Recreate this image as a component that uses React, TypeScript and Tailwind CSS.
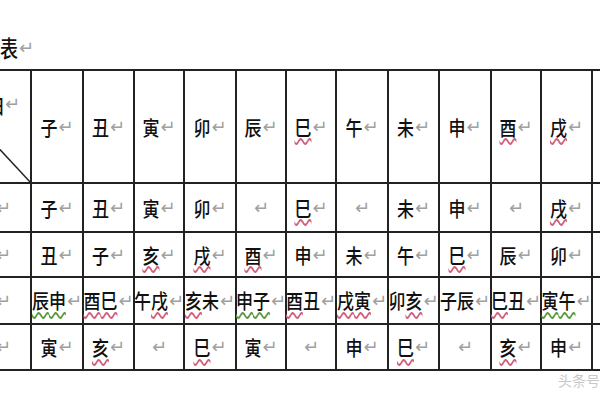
import React from 'react'

type Cell = [string, string]

const header: Cell[] = [
  ['子', '.'], ['丑', '.'], ['寅', '.'], ['卯', '.'], ['辰', '.'], ['巳', 'r'],
  ['午', '.'], ['未', '.'], ['申', '.'], ['酉', 'r'], ['戌', 'r'], ['', ''],
]

const rows: Cell[][] = [
  [['子', '.'], ['丑', '.'], ['寅', '.'], ['卯', '.'], ['', ''], ['巳', 'r'], ['', ''], ['未', '.'], ['申', '.'], ['', ''], ['戌', 'r'], ['', '']],
  [['丑', '.'], ['子', '.'], ['亥', 'r'], ['戌', 'r'], ['酉', 'r'], ['申', '.'], ['未', '.'], ['午', '.'], ['巳', 'r'], ['辰', '.'], ['卯', '.'], ['', '']],
  [['辰申', 'gg'], ['酉巳', 'rr'], ['午戌', '.r'], ['亥未', 'r.'], ['申子', 'gg'], ['酉丑', 'r.'], ['戌寅', 'rr'], ['卯亥', '.r'], ['子辰', '..'], ['巳丑', 'r.'], ['寅午', 'gg'], ['', '']],
  [['寅', '.'], ['亥', 'r'], ['', ''], ['巳', 'r'], ['寅', '.'], ['', ''], ['申', '.'], ['巳', 'r'], ['', ''], ['亥', 'r'], ['申', '.'], ['', '']],
]

const rowHeights = ['h-[49px]', 'h-[45px]', 'h-[47px]', 'h-[46px]']

// Word's paragraph mark
function Mark() {
  return <span className="ml-[1px] text-[18px] leading-none text-[#a0a0a0] font-['DejaVu_Sans',sans-serif]">↵</span>
}

function Word({ text, marks }: { text: string; marks: string }) {
  return (
    <span className="inline-flex">
      {text.split('').map((ch, i) => (
        <span
          key={i}
          className={
            'inline-block scale-y-[1.2] text-[17px] font-medium leading-none text-[#111] ' +
            (marks[i] === 'r'
              ? 'underline decoration-wavy decoration-[#d0607a] underline-offset-[2px]'
              : marks[i] === 'g'
              ? 'underline decoration-wavy decoration-[#5a9a3a] underline-offset-[2px]'
              : '')
          }
        >
          {ch}
        </span>
      ))}
    </span>
  )
}

function DataCell({ cell, last }: { cell: Cell; last?: boolean }) {
  if (last) return <div className="border-r-2 border-b-2 border-[#222]" />
  return (
    <div className="flex items-center justify-center border-r-2 border-b-2 border-[#222]">
      {cell[0] && <Word text={cell[0]} marks={cell[1]} />}
      <Mark />
    </div>
  )
}

export default function App() {
  return (
    <div className="relative w-[600px] h-[400px] overflow-hidden bg-white font-['Noto_Sans_CJK_SC',sans-serif]">
      <div className="h-[69px] pt-[36px] flex items-start">
        <span className="inline-block scale-y-[1.25] origin-top text-[18px] font-medium leading-none text-[#111]">表</span>
        <span className="mt-[3px] flex"><Mark /></span>
      </div>

      <div className="ml-[-21px] w-[664px] grid grid-cols-[53px_52px_51px_50px_52px_50px_50px_52px_51px_52px_50px_51px_52px] border-t-2 border-[#222]">
        <div className="relative h-[113px] border-r-2 border-b-2 border-[#222]">
          <div className="flex items-center justify-end pr-[10px] pt-[24px]">
            <Word text="日" marks="." />
            <span className="-ml-[1px] flex"><Mark /></span>
          </div>
          <svg className="absolute left-0 top-0" width="53" height="113">
            <line x1="0" y1="56" x2="53" y2="113" stroke="#222" strokeWidth="1.5" />
          </svg>
        </div>
        {header.map((c, i) => (
          <div key={i} className="h-[113px] flex items-center justify-center border-r-2 border-b-2 border-[#222]">
            {c[0] && <Word text={c[0]} marks={c[1]} />}
            {i < 11 && <Mark />}
          </div>
        ))}

        {rows.map((r, ri) => (
          <React.Fragment key={ri}>
            <div className={`${rowHeights[ri]} flex items-center pl-[16px] border-r-2 border-b-2 border-[#222]`}>
              <Mark />
            </div>
            {r.map((c, ci) => (
              <DataCell key={ci} cell={c} last={ci === 11} />
            ))}
          </React.Fragment>
        ))}
      </div>

      <div className="absolute left-[558px] top-[373px] text-[14px] leading-none text-[#c8c8c8]">头条号</div>
    </div>
  )
}
